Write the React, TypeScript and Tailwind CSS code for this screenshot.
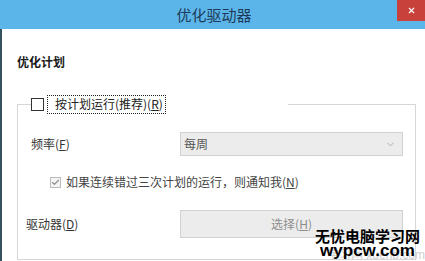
import { X, ChevronDown, Check } from 'lucide-react';

const font = "font-['Microsoft_YaHei','Noto_Sans_CJK_SC',sans-serif]";

export default function App() {
    return (
        <div className={`relative w-[425px] h-[261px] overflow-hidden bg-white flex flex-col ${font}`}>
            {/* Title bar */}
            <div className="relative h-[29px] shrink-0 bg-[#5cb5e9] flex items-center justify-center">
                <span className="pl-[3px] text-[15px] leading-[20px] text-[#1d3b58]">优化驱动器</span>
                <div className="absolute top-0 right-0 w-[28px] h-[21px] bg-[#c8423b] flex items-center justify-center">
                    <X size={9} strokeWidth={3} className="text-white" />
                </div>
            </div>

            {/* Body */}
            <div className="flex-1 border-l-2 border-[#34505f] pl-[15px] pt-[25px]">
                <h2 className="text-[12px] leading-[16px] font-bold text-[#1a1a1a]">优化计划</h2>

                <fieldset className="mt-[24px] w-[399px] h-[166px] border border-[#d6d6d6] p-0">
                    <legend className="ml-[13px] w-[257px] h-[20px] p-0 flex items-center">
                        <span className="w-[13px] h-[13px] border border-[#333] bg-white" />
                        <span className="ml-[3px] h-[19px] pl-[7px] pr-[2px] border border-dotted border-[#222] flex items-center text-[12px] text-[#222]">
                            按计划运行(推荐)(<span className="underline">R</span>)
                        </span>
                    </legend>

                    {/* Frequency */}
                    <div className="mt-[18px] pl-[13px] flex items-center">
                        <span className="w-[149px] text-[12px] text-[#333]">
                            频率(<span className="underline">F</span>)
                        </span>
                        <div className="w-[223px] h-[24px] bg-[#ececec] border border-[#d2d2d2] pl-[3px] pr-[6px] flex items-center justify-between">
                            <span className="text-[12px] text-[#555]">每周</span>
                            <ChevronDown size={11} className="text-[#aaa]" />
                        </div>
                    </div>

                    {/* Notify */}
                    <div className="mt-[18px] pl-[32px] h-[16px] flex items-center gap-[5px]">
                        <span className="w-[11px] h-[11px] border border-[#bcbcbc] bg-[#f4f4f4] flex items-center justify-center">
                            <Check size={9} strokeWidth={3} className="text-[#8a8a8a]" />
                        </span>
                        <span className="text-[12px] text-[#444]">
                            如果连续错过三次计划的运行，则通知我(<span className="underline">N</span>)
                        </span>
                    </div>

                    {/* Drive */}
                    <div className="mt-[20px] pl-[8px] flex items-center">
                        <span className="w-[154px] text-[12px] text-[#333]">
                            驱动器(<span className="underline">D</span>)
                        </span>
                        <button className="w-[223px] h-[28px] bg-[#ececec] border border-[#d2d2d2] text-[12px] text-[#8c8c8c]">
                            选择(<span className="underline">H</span>)
                        </button>
                    </div>
                </fieldset>
            </div>

            {/* Watermark */}
            <div className="absolute right-[5px] bottom-[2px] flex flex-col items-center leading-none">
                <span className="absolute -right-[5px] -bottom-[2px] text-[12px] text-[#cfcfcf] whitespace-nowrap font-['Liberation_Sans','Noto_Sans_CJK_SC',sans-serif]">学习网 xuenb.com</span>
                <span className="relative text-[15px] font-bold text-black whitespace-nowrap font-['Noto_Sans_CJK_SC',sans-serif]">无忧电脑学习网</span>
                <span className="relative text-[17px] font-bold text-black font-['Liberation_Sans',sans-serif] -mt-[1px]">wypcw.com</span>
            </div>
        </div>
    );
}
